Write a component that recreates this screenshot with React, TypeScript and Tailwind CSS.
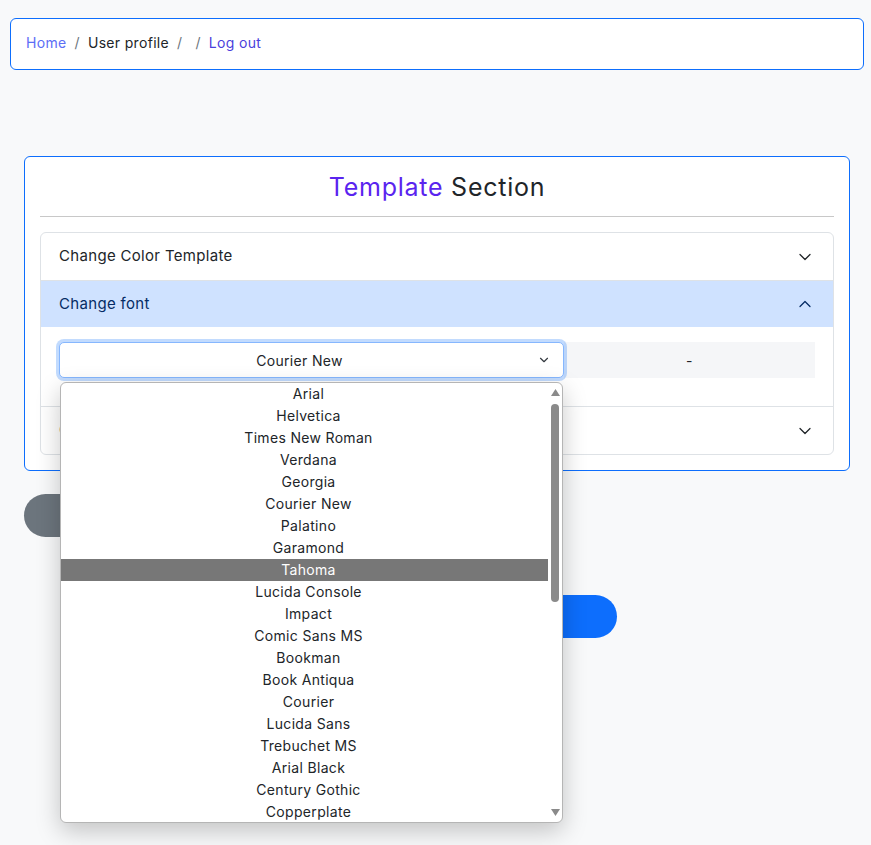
import { ChevronDown, ChevronUp } from "lucide-react";

const fonts = [
  "Arial",
  "Helvetica",
  "Times New Roman",
  "Verdana",
  "Georgia",
  "Courier New",
  "Palatino",
  "Garamond",
  "Tahoma",
  "Lucida Console",
  "Impact",
  "Comic Sans MS",
  "Bookman",
  "Book Antiqua",
  "Courier",
  "Lucida Sans",
  "Trebuchet MS",
  "Arial Black",
  "Century Gothic",
  "Copperplate",
];

function FontDropdown() {
  return (
    <div className="absolute left-[1px] top-[40px] z-10 flex h-[441px] w-[503px] rounded-[6px] border border-[#b5b5b5] bg-white shadow-[0_8px_24px_rgba(0,0,0,0.22)]">
      <ul className="flex-1">
        {fonts.map((f) => (
          <li
            key={f}
            className={
              f === "Tahoma"
                ? "h-[22px] bg-[#777777] pl-[8px] text-center text-[14px] leading-[22px] text-white"
                : "h-[22px] pl-[8px] text-center text-[14px] leading-[22px] text-[#212529]"
            }
          >
            {f}
          </li>
        ))}
      </ul>
      {/* scrollbar */}
      <div className="flex w-[14px] flex-col items-center pt-[6px] pb-[6px]">
        <svg width="9" height="7" viewBox="0 0 9 7">
          <path d="M4.5 0 L9 7 L0 7 Z" fill="#8a8a8a" />
        </svg>
        <div className="mt-[8px] h-[198px] w-[8px] rounded-full bg-[#8a8a8a]" />
        <div className="flex-1" />
        <svg width="9" height="7" viewBox="0 0 9 7">
          <path d="M0 0 L9 0 L4.5 7 Z" fill="#8a8a8a" />
        </svg>
      </div>
    </div>
  );
}

function AccordionHeader({ title, open }: { title: string; open?: boolean }) {
  return (
    <div
      className={
        open
          ? "flex h-[46px] items-center justify-between bg-[#cfe2ff] pl-[18px] pr-[18px] text-[15px] text-[#052c65]"
          : "flex h-[47px] items-center justify-between pl-[18px] pr-[18px] text-[15px] text-[#212529]"
      }
    >
      <span>{title}</span>
      {open ? (
        <ChevronUp size={20} strokeWidth={1.5} className="text-[#052c65]" />
      ) : (
        <ChevronDown size={20} strokeWidth={1.5} className="text-[#212529]" />
      )}
    </div>
  );
}

export default function App() {
  return (
    <div
      className="min-h-[845px] bg-[#f8f9fa] pt-[18px] pb-10 tracking-[0.02em]"
      style={{ fontFamily: "Inter, 'Noto Sans', sans-serif" }}
    >
      <nav className="mx-[10px] mr-[7px] flex h-[52px] items-center rounded-[6px] border border-[#0d6efd] bg-white px-[15px] pb-[3px] text-[14px]">
        <a className="text-[#5c6ef6]">Home</a>
        <span className="px-[8px] text-[#6c757d]">/</span>
        <span className="text-[#212529]">User profile</span>
        <span className="px-[8px] text-[#6c757d]">/</span>
        <span className="w-[5px]" />
        <span className="pr-[8px] text-[#6c757d]">/</span>
        <a className="text-[#4a3fdc]">Log out</a>
      </nav>

      <section className="ml-[24px] mr-[21px] mt-[86px] rounded-[6px] border border-[#0d6efd] bg-white px-[15px] pt-[12px] pb-[15px]">
        <h2 className="text-center text-[25px] leading-[36px] tracking-[0.03em] text-[#212529]">
          <span className="text-[#5a24ef]">Template</span> Section
        </h2>
        <hr className="mt-[11px] mb-[15px] border-t border-[#c8c8c8]" />

        <div className="rounded-[6px] border border-[#dee2e6]">
          <AccordionHeader title="Change Color Template" />
          <div className="border-t border-[#dee2e6]">
            <AccordionHeader title="Change font" open />
            <div className="flex px-[18px] pt-[15px] pb-[28px]">
              <div className="relative w-[505px]">
                <div className="flex h-[36px] items-center justify-center rounded-[5px] border border-[#86b7fe] bg-white pl-[12px] pr-[36px] text-[14px] text-[#212529] shadow-[0_0_0_3px_rgba(13,110,253,0.25)]">
                  <span>Courier New</span>
                  <ChevronDown size={14} strokeWidth={2} className="absolute right-[13px] text-[#343a40]" />
                </div>
                <FontDropdown />
              </div>
              <div className="flex h-[36px] flex-1 items-center justify-center bg-[#f5f6f8] text-[14px] text-[#212529]">
                -
              </div>
            </div>
          </div>
          <div className="border-t border-[#dee2e6]">
            <AccordionHeader title="Change layout" />
          </div>
        </div>
      </section>

      <div className="ml-[24px] mt-[23px] flex h-[43px] w-[200px] items-center justify-center rounded-full bg-[#6c757d] text-[15px] text-white">
        Reset
      </div>
      <div className="ml-[254px] mt-[58px] flex h-[43px] w-[363px] items-center justify-center rounded-full bg-[#0d6efd] text-[15px] text-white">
        Save
      </div>
    </div>
  );
}
